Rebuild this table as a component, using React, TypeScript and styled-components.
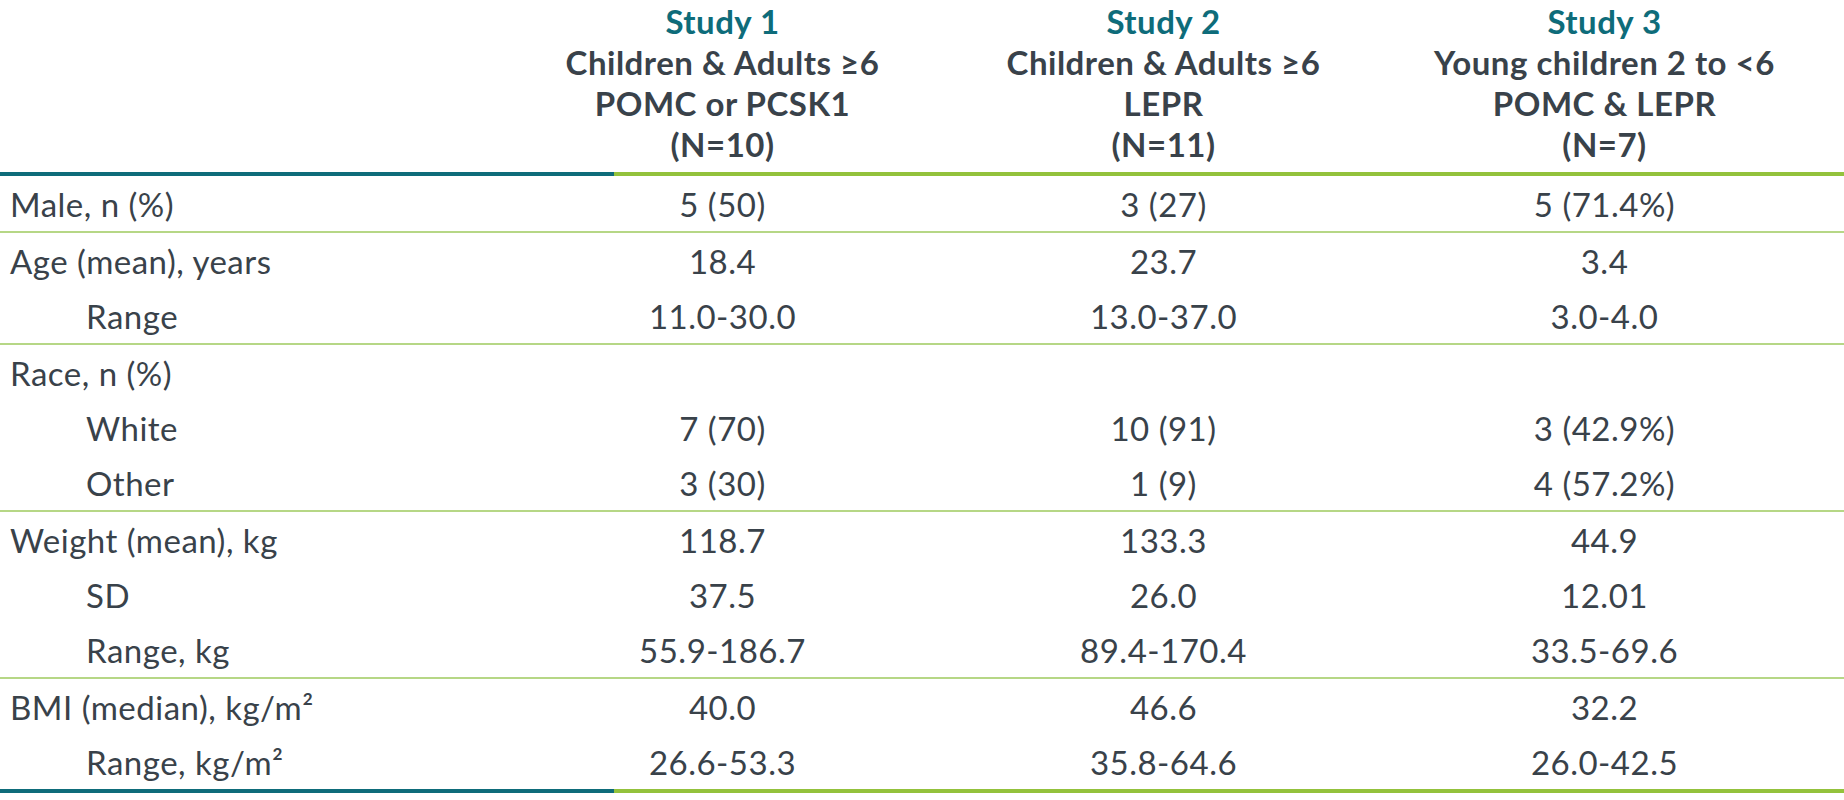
import styled, { createGlobalStyle } from "styled-components";

const GlobalStyle = createGlobalStyle`
  html, body {
    margin: 0;
    padding: 0;
    background: #ffffff;
  }
  body {
    font-family: Lato, "Noto Sans", "Liberation Sans", sans-serif;
    color: #39424a;
  }
`;

const TEAL = "#0e6c7a";
const GREEN = "#93c23c";

const Page = styled.div`
  width: 1844px;
`;

const Row = styled.div`
  display: grid;
  grid-template-columns: 502px 441px 441px 441px;
  align-items: center;
  height: 55px;
`;

const HeaderRow = styled(Row)`
  height: 172px;
  align-items: end;
  box-sizing: border-box;
  padding-bottom: 7px;
`;

const HeadCell = styled.div`
  text-align: center;
  font-weight: 700;
  font-size: 33px;
  letter-spacing: 0.5px;
  line-height: 41px;
  white-space: nowrap;
`;

const StudyTitle = styled.div`
  color: ${TEAL};
`;

const ThickRule = styled.div`
  height: 4px;
  background: linear-gradient(to right, ${TEAL} 0, ${TEAL} 614px, ${GREEN} 614px, ${GREEN} 100%);
`;

const ThinRule = styled.div`
  height: 2px;
  background: #b6d786;
`;

const Label = styled.div<{ $indent?: boolean }>`
  font-size: 33px;
  letter-spacing: 0.5px;
  padding-left: ${(p) => (p.$indent ? 86 : 10)}px;
  white-space: nowrap;
`;

const Value = styled.div`
  font-size: 33px;
  letter-spacing: 0.5px;
  text-align: center;
`;

type Line = { label: string; indent?: boolean; values: string[] };

const groups: Line[][] = [
  [{ label: "Male, n (%)", values: ["5 (50)", "3 (27)", "5 (71.4%)"] }],
  [
    { label: "Age (mean), years", values: ["18.4", "23.7", "3.4"] },
    { label: "Range", indent: true, values: ["11.0-30.0", "13.0-37.0", "3.0-4.0"] },
  ],
  [
    { label: "Race, n (%)", values: ["", "", ""] },
    { label: "White", indent: true, values: ["7 (70)", "10 (91)", "3 (42.9%)"] },
    { label: "Other", indent: true, values: ["3 (30)", "1 (9)", "4 (57.2%)"] },
  ],
  [
    { label: "Weight (mean), kg", values: ["118.7", "133.3", "44.9"] },
    { label: "SD", indent: true, values: ["37.5", "26.0", "12.01"] },
    { label: "Range, kg", indent: true, values: ["55.9-186.7", "89.4-170.4", "33.5-69.6"] },
  ],
  [
    { label: "BMI (median), kg/m²", values: ["40.0", "46.6", "32.2"] },
    { label: "Range, kg/m²", indent: true, values: ["26.6-53.3", "35.8-64.6", "26.0-42.5"] },
  ],
];

const studies = [
  { title: "Study 1", lines: ["Children & Adults ≥6", "POMC or PCSK1", "(N=10)"] },
  { title: "Study 2", lines: ["Children & Adults ≥6", "LEPR", "(N=11)"] },
  { title: "Study 3", lines: ["Young children 2 to <6", "POMC & LEPR", "(N=7)"] },
];

export default function App() {
  return (
    <Page>
      <GlobalStyle />
      <HeaderRow>
        <div />
        {studies.map((s) => (
          <HeadCell key={s.title}>
            <StudyTitle>{s.title}</StudyTitle>
            {s.lines.map((l) => (
              <div key={l}>{l}</div>
            ))}
          </HeadCell>
        ))}
      </HeaderRow>
      <ThickRule />
      {groups.map((g, gi) => (
        <div key={gi}>
          {gi > 0 && <ThinRule />}
          {g.map((line, li) => (
            <Row key={li}>
              <Label $indent={line.indent}>{line.label}</Label>
              {line.values.map((v, vi) => (
                <Value key={vi}>{v}</Value>
              ))}
            </Row>
          ))}
        </div>
      ))}
      <ThickRule />
    </Page>
  );
}
